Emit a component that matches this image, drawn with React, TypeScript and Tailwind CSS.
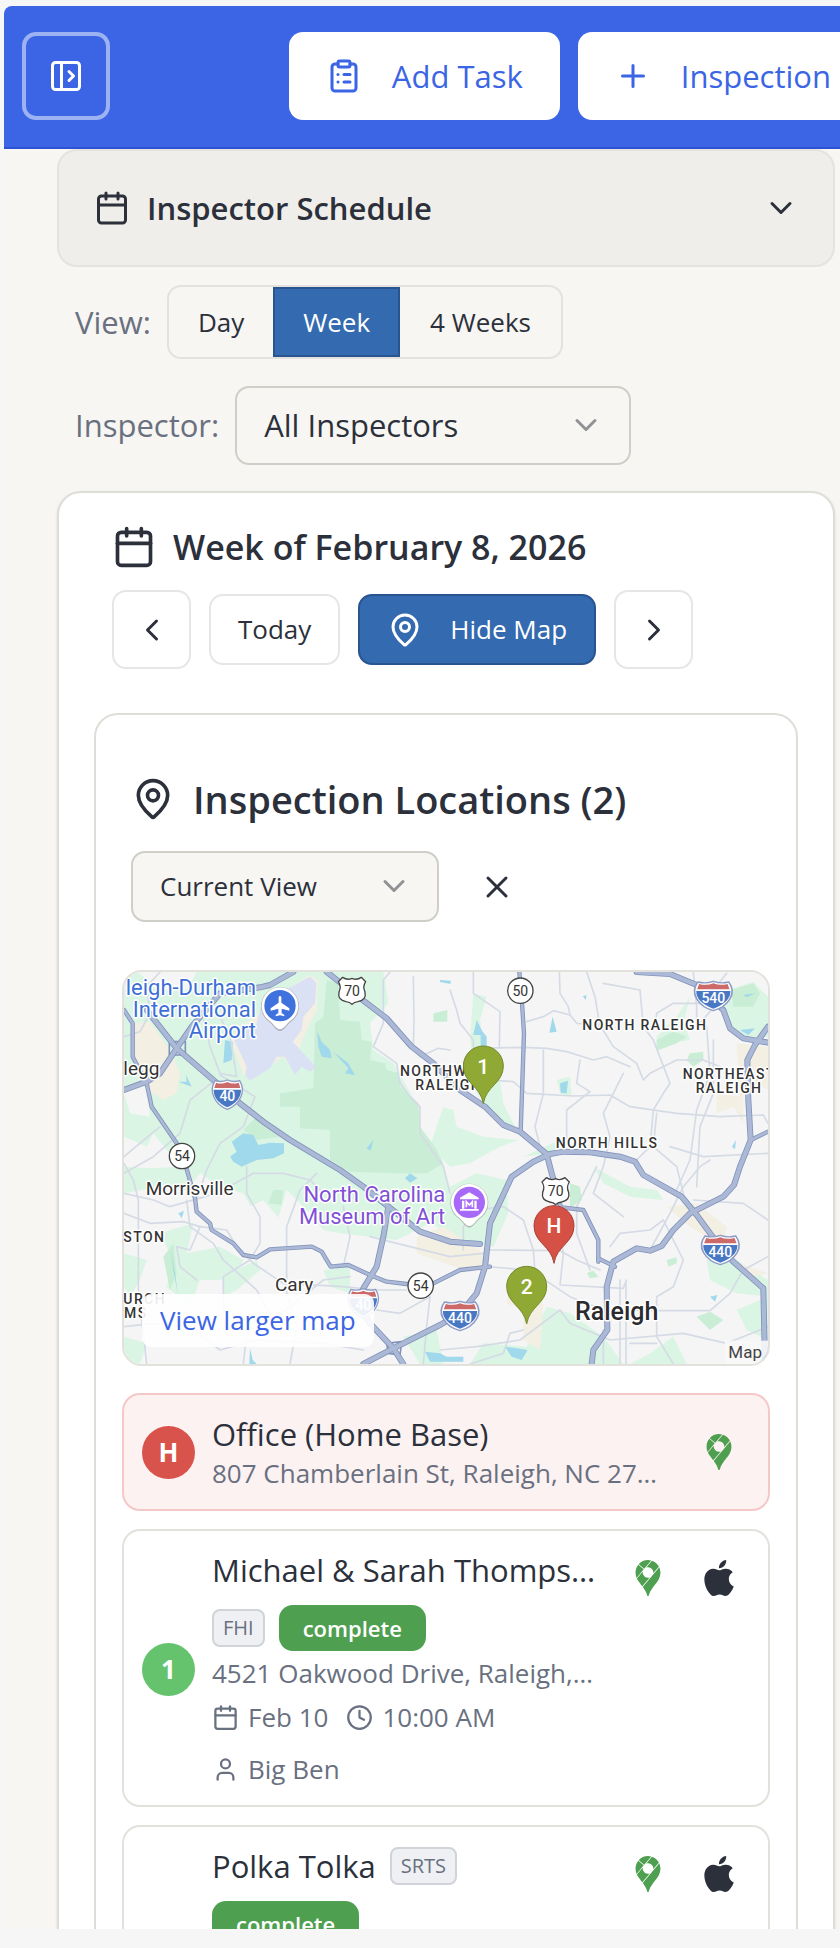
import React from 'react';
import {
  Calendar,
  ChevronDown,
  ChevronLeft,
  ChevronRight,
  ClipboardList,
  Clock,
  MapPin,
  PanelLeftOpen,
  Plus,
  User,
  X,
} from 'lucide-react';
import { SiApple, SiGooglemaps } from 'react-icons/si';

interface Inspection {
  id: number;
  client: string;
  code: string;
  status: string;
  address: string;
  date: string;
  time: string;
  inspector: string;
}

const inspections: Inspection[] = [
  {
    id: 1,
    client: 'Michael & Sarah Thompson',
    code: 'FHI',
    status: 'complete',
    address: '4521 Oakwood Drive, Raleigh, NC 27612',
    date: 'Feb 10',
    time: '10:00 AM',
    inspector: 'Big Ben',
  },
  {
    id: 2,
    client: 'Polka Tolka',
    code: 'SRTS',
    status: 'complete',
    address: '1200 Western Blvd, Raleigh, NC 27606',
    date: 'Feb 11',
    time: '1:00 PM',
    inspector: 'Big Ben',
  },
];

const greens = [
  '42,36 820,36 835,130 780,190 790,270 850,310 890,380 925,440 932,540 1000,610 1020,680 1100,640 1190,660 1195,760 1150,860 1040,830 960,790 860,840 690,820 640,810 600,760 530,690 500,790 440,770 400,700 330,680 270,640 230,690 150,680 42,700',
  '990,440 1030,450 1040,500 1120,530 1225,540 1170,560 1080,610 1020,620 960,560',
  '1090,100 1130,110 1110,180 1125,290 1165,330 1180,430 1215,500 1180,500 1100,400 1080,240',
  '1850,90 1930,66 1974,110 1974,230 1900,240 1860,200 1840,150',
  '150,820 250,790 230,880 330,860 400,900 370,960 270,960 240,1040 170,980 190,900',
  '42,880 110,900 90,960 60,1010 42,980',
  '42,1130 110,1150 90,1212 42,1212',
  '640,930 720,920 720,1000 660,980',
  '1120,1150 1250,1160 1310,1040 1380,1060 1480,1130 1540,1212 1080,1212',
  '1620,1180 1690,1130 1730,1212 1560,1212',
  '1790,900 1880,900 1974,960 1974,1010 1880,1000 1800,960',
  '1880,1050 1974,1010 1974,1140 1910,1110',
  '1450,620 1560,680 1640,690 1660,720 1560,710 1480,670',
  '1640,230 1700,170 1740,110 1720,190 1740,240 1680,250 1640,270',
  '1340,360 1380,350 1385,410 1350,400',
  '1240,590 1350,540 1330,580',
  '340,950 440,900 450,930 380,990 340,1010',
  '880,1130 980,1110 1000,1212 930,1212',
];

const parks = [
  '650,60 685,70 690,180 750,185 755,240 785,245 780,300 825,310 830,330 870,340 870,380 925,430 930,500 975,560 1000,610 950,640 860,640 720,635 660,600 660,510 570,505 570,440 510,440 510,400 610,385 615,190 640,170',
  '970,160 1012,150 1012,185 970,185',
  '400,510 440,470 510,530 440,540',
  '1865,90 1930,70 1950,100 1930,140 1870,140',
  '1740,280 1780,275 1780,300 1750,320 1730,300',
  '1640,240 1690,215 1730,230 1700,250 1640,272',
  '1380,670 1410,680 1415,720 1380,745',
  '1670,900 1700,892 1700,910 1675,920',
  '1760,1070 1800,1055 1840,1080 1800,1110',
  '1430,940 1450,932 1465,950 1440,955',
  '160,890 190,850 200,940 180,990',
  '490,690 520,690 515,735 475,730',
];

const sands = [
  '70,190 120,185 180,270 210,340 200,400 160,420 100,380 72,300',
  '545,80 600,45 625,60 620,150 580,230 550,330 520,290 430,350 400,345 360,230',
  '920,830 1000,800 1110,870 1140,930 1060,930 920,880',
  '1195,990 1250,1040 1300,1030 1290,1170 1240,1140 1240,1050 1190,1030',
  '1880,250 1974,260 1974,390 1900,350 1900,490 1870,440 1820,460 1820,400 1890,410',
  '1670,740 1760,730 1850,800 1840,860 1740,800',
  '1860,900 1974,940 1920,950',
];

const urban = [
  '42,400 105,375 120,470 60,460',
  '85,36 260,36 230,90 140,90',
  '42,530 110,560 130,520 210,620 120,625 42,620',
  '930,450 1000,440 960,560',
  '380,760 460,720 520,790 600,750 640,860 420,850',
];

const waters = [
  '365,545 400,520 430,525 445,555 480,548 522,550 522,580 490,595 440,600 395,620 370,605 360,590 380,575',
  '622,215 635,245 660,270 665,295 635,290 625,260',
  '670,275 715,310 735,345 705,340 715,325',
  '345,240 368,245 365,300 340,310',
  '228,345 245,380 205,365 230,365',
  '770,565 790,540 782,572',
  '1100,180 1118,215 1130,230 1130,260 1112,260 1112,225 1090,225',
  '1328,170 1340,215 1318,218',
  '1350,370 1374,362 1370,400 1352,398',
  '1418,108 1430,106 1427,120',
  '1890,210 1935,205 1915,225',
  '1900,105 1935,100 1910,112',
  '885,655 900,640 922,655 900,668',
  '182,870 195,940 205,1010 190,930',
  '420,1165 428,1200 440,1212 418,1212',
  '945,1175 990,1180 1010,1190 1060,1190 1060,1205 960,1205',
  '1185,1160 1220,1165 1253,1170 1235,1200 1205,1190',
  '1800,1010 1822,1005 1815,1025',
  '1866,560 1878,540 1875,568',
  '990,60 1022,62 1022,72 990,66',
  '205,760 222,752 215,775',
];

const streets = [
  'M42 230 90 215 120 160 110 80 150 36',
  'M280 180 300 260 330 340 380 350 360 230 320 150',
  'M330 345 435 410 400 500 330 550 290 630 260 720',
  'M310 365 240 420 210 520 130 590 42 640',
  'M42 590 150 500',
  'M840 36 820 60 820 190 790 260 860 310 870 370 900 410 930 440 930 520 1000 620 1020 700',
  'M910 50 912 180 910 260 930 290 985 265 1020 270',
  'M1020 90 1040 150 1050 190 1090 240 1090 265 1240 262 1310 265 1370 275 1450 300 1490 290 1560 320',
  'M1090 36 1090 100 1170 155 1168 260',
  'M1250 185 1300 170 1330 152 1380 165 1400 190 1470 195 1510 260 1580 310 1600 360 1620 340 1700 300 1780 300 1830 320',
  'M1348 36 1350 100 1375 140 1380 165',
  'M1430 36 1455 110 1470 200',
  'M1480 70 1590 90 1600 200 1630 240 1680 370 1660 400 1630 450 1620 560 1580 600',
  'M1636 190 1640 160 1690 130 1780 130 1850 40',
  'M1750 36 1760 140 1760 200 1840 110',
  'M1140 360 1210 365 1250 400 1390 408 1500 405 1560 440 1700 460 1830 470 1960 465 1974 490',
  'M1290 560 1275 500 1300 400 1300 270',
  'M1410 300 1400 370 1440 395 1370 450 1370 540 1390 580',
  'M1540 340 1480 460 1500 530 1480 620 1450 700 1540 770',
  'M1640 460 1630 560 1700 620 1720 700',
  'M1790 200 1800 340 1760 450 1740 600 1700 690',
  'M1810 240 1810 400 1770 500 1760 680',
  'M1680 560 1780 590 1974 580',
  'M42 700 130 720 180 740 320 700 430 640 520 640 600 660 640 700',
  'M42 760 120 790 220 785 270 800 240 870 200 860 210 920 260 960',
  'M42 610 70 660 85 720 85 1000 100 1120 110 1212',
  'M230 720 240 800 310 850 340 900 440 990 490 1080 640 960 720 950',
  'M270 800 350 810 380 860 430 910 520 970 700 980 800 990 890 990',
  'M410 620 410 700 450 770 450 850 420 900 340 950 340 1080',
  'M620 640 570 690 530 800 530 1000 560 1100 540 1212',
  'M700 740 720 830 700 920',
  'M780 830 900 860 1020 890 1120 880',
  'M800 1050 870 1060 960 1010 950 1100 940 1212',
  'M42 1100 130 1090 240 1100 330 1170 440 1140 640 1150 760 1170',
  'M400 1212 410 1120 450 1060',
  'M1060 870 1060 800 1100 750 1180 740 1240 780 1270 870 1280 1000',
  'M1140 870 1350 872 1400 900 1470 930',
  'M1330 690 1340 780 1360 880 1350 975 1540 985 1545 970',
  'M1130 920 1260 930 1380 1010 1480 1050 1650 1052 1800 1052 1860 1000 1900 930 1974 890',
  'M990 1170 1100 1160 1230 1140 1350 1050 1380 1090 1500 1140 1720 1120 1850 1150 1974 1100',
  'M1500 860 1530 820 1620 810 1660 780 1680 820 1720 900 1690 980 1640 1010 1640 1130 1690 1212',
  'M1530 960 1530 1212',
  'M1548 960 1548 1212',
  'M1480 1110 1480 1212',
  'M1620 870 1680 760 1720 680 1770 620 1800 600',
  'M1560 1150 1640 1150',
  'M1750 720 1900 730 1974 780',
  'M1240 1110 1200 1120 1180 1180 1080 1212',
  'M1460 620 1400 740 1400 820 1440 930',
];

const highways = [
  'M110 150 200 265 310 360 390 430 460 485 540 540 690 630 760 680 835 740 930 815 1020 845 1110 852',
  'M835 740 820 830 800 920 760 985 750 1040 780 1090 850 1165 880 1212',
  'M42 390 110 365 150 340 200 265 245 200 330 100 450 82 480 75 550 36',
  'M650 36 725 95 830 175 905 260 970 310 1050 390 1125 440 1180 495 1230 515 1310 582 1325 640 1340 690',
  'M760 1212 850 1165 990 1095 1050 1060 1100 1000 1125 920 1140 790 1205 650 1270 605 1320 582 1360 575 1440 577 1530 590 1575 605 1600 645 1715 710 1760 765 1830 860 1870 905 1960 985 1965 1212',
  'M1580 36 1680 42 1760 75 1840 150 1860 205 1900 235 1974 248',
  'M1974 200 1935 255 1912 300 1915 420 1922 540 1890 620 1872 675 1840 710 1740 760 1690 810 1655 858 1620 872 1580 865 1510 905 1490 980 1492 1110 1450 1170 1445 1212',
];

const arterials = [
  'M42 150 68 190 68 290 110 370 125 440 200 550 228 620 255 715 260 755 300 790 305 810 370 850 400 885 440 892 480 868 605 860 635 875 662 920 715 915 780 945 830 965 890 972 930 977 970 970 1050 930 1140 920',
  'M1228 36 1236 130 1242 220 1232 515',
  'M1340 720 1355 742 1420 750 1465 840 1465 905',
  'M1465 895 1515 920',
  'M1922 540 1974 515',
];

const Interstate = ({ x, y, label, wide = false }: { x: number; y: number; label: string; wide?: boolean }) => (
  <g transform={`translate(${x} ${y})`}>
    <g transform={wide ? 'scale(1.25 1)' : undefined}>
      <path
        d="M-37-40Q-18-34 0-42Q18-34 37-40Q52-15 40 10Q28 36 0 46Q-28 36-40 10Q-52-15-37-40Z"
        fill="#fff"
        stroke="#8d9cc6"
        strokeWidth="4"
      />
      <path d="M-34-34Q-16-28 0-36Q16-28 34-34L39-18H-39Z" fill="#cb6a68" />
      <path d="M-41-13H41Q42 20 0 40Q-42 20-41-13Z" fill="#4878c4" />
    </g>
    <text y="22" textAnchor="middle" fontSize="42" fontWeight="500" fill="#fff">
      {label}
    </text>
  </g>
);

const StateRoute = ({ x, y, label }: { x: number; y: number; label: string }) => (
  <g transform={`translate(${x} ${y})`}>
    <circle r="38" fill="#fff" stroke="#444" strokeWidth="4" />
    <text y="15" textAnchor="middle" fontSize="42" fill="#333">
      {label}
    </text>
  </g>
);

const UsRoute = ({ x, y, label }: { x: number; y: number; label: string }) => (
  <g transform={`translate(${x} ${y})`}>
    <path
      d="M-28-40Q-14-30 0-37Q14-30 28-40L41-27Q31-12 39 4Q44 28 18 33Q6 34 0 41Q-6 34-18 33Q-44 28-39 4Q-31-12-41-27Z"
      fill="#fff"
      stroke="#444"
      strokeWidth="4"
      strokeLinejoin="round"
    />
    <text y="15" textAnchor="middle" fontSize="42" fill="#333">
      {label}
    </text>
  </g>
);

const Marker = ({ x, y, label, fill, stroke }: { x: number; y: number; label: string; fill: string; stroke: string }) => (
  <g transform={`translate(${x} ${y})`}>
    <path
      d="M0 113C-8 60-60 52-60 0A60 60 0 0 1 60 0C60 52 8 60 0 113Z"
      fill={fill}
      stroke={stroke}
      strokeWidth="3"
    />
    <text y="23" textAnchor="middle" fontSize="63" fontWeight="500" fill="#fff">
      {label}
    </text>
  </g>
);

const PlacePin = ({ x, y, fill, children }: { x: number; y: number; fill: string; children: React.ReactNode }) => (
  <g transform={`translate(${x} ${y})`}>
    <path
      d="M0 76C-12 76-18 58-40 42A57 57 0 1 1 40 42C18 58 12 76 0 76Z"
      fill="#888"
      opacity=".55"
    />
    <path d="M0 71C-12 71-18 54-38 40A55 55 0 1 1 38 40C18 54 12 71 0 71Z" fill="#fff" />
    <circle r="47" fill={fill} />
    {children}
  </g>
);

const LocationsMap = () => (
  <svg
    viewBox="42 36 1932 1176"
    preserveAspectRatio="xMidYMid slice"
    className="block h-[392px] w-full bg-[#f5f5f5] font-[Roboto,sans-serif]"
    role="img"
    aria-label="Map of inspection locations"
  >
    {greens.map((p) => <polygon key={p} points={p} fill="#daf5e4" />)}
    {urban.map((p) => <polygon key={p} points={p} fill="#f5f5f5" />)}
    {parks.map((p) => <polygon key={p} points={p} fill="#c9edd5" />)}
    {sands.map((p) => <polygon key={p} points={p} fill="#f3efe3" />)}
    <polygon
      points="370,235 440,190 460,110 545,80 600,50 620,70 615,130 580,170 575,210 548,245 618,320 600,335 575,320 555,345 525,290 500,290 480,325 420,362 405,345 410,320"
      fill="#dbe1f5"
    />
    {waters.map((p) => <polygon key={p} points={p} fill="#a0d8ec" />)}

    <g fill="none" strokeLinejoin="round" strokeLinecap="round">
      {streets.map((d) => <path key={d} d={d} stroke="#d5dbe5" strokeWidth="5" />)}
      {arterials.map((d) => <path key={d} d={d} stroke="#8192bb" strokeWidth="13" />)}
      {highways.map((d) => <path key={d} d={d} stroke="#8192bb" strokeWidth="18" />)}
      <path d="M178 245H226V285H178ZM830 1150 875 1145 870 1185 835 1180Z" stroke="#8192bb" strokeWidth="5" />
      {arterials.map((d) => <path key={d} d={d} stroke="#abb9d6" strokeWidth="8" />)}
      {highways.map((d) => <path key={d} d={d} stroke="#abb9d6" strokeWidth="13" />)}
    </g>

    <Interstate x={352} y={402} label="40" />
    <Interstate x={1810} y={106} label="540" wide />
    <Interstate x={760} y={1028} label="40" />
    <Interstate x={1050} y={1066} label="440" wide />
    <Interstate x={1831} y={868} label="440" wide />
    <StateRoute x={216} y={588} label="54" />
    <StateRoute x={1231} y={92} label="50" />
    <StateRoute x={932} y={977} label="54" />
    <UsRoute x={726} y={92} label="70" />
    <UsRoute x={1337} y={693} label="70" />

    <g stroke="#fff" strokeWidth="9" strokeLinejoin="round" style={{ paintOrder: 'stroke' }}>
      <g fontSize="66" fill="#3d6fd6" textAnchor="end">
        <text x="438" y="105">leigh-Durham</text>
        <text x="438" y="170">International</text>
        <text x="438" y="234">Airport</text>
      </g>
      <g fontSize="66" fill="#8150d6" textAnchor="end">
        <text x="1006" y="726">North Carolina</text>
        <text x="1006" y="792">Museum of Art</text>
      </g>
      <g fontSize="57" fill="#333">
        <text x="40" y="346">legg</text>
        <text x="107" y="704">Morrisville</text>
        <text x="495" y="993">Cary</text>
      </g>
      <text x="1520" y="1079" textAnchor="middle" fontSize="75" fontWeight="500" fill="#2b2b2f">Raleigh</text>
      <g fontSize="42" fontWeight="500" fill="#333" className="tracking-widest">
        <text x="870" y="347">NORTHWEST</text>
        <text x="916" y="389">RALEIGH</text>
        <text x="1417" y="210">NORTH RALEIGH</text>
        <text x="1718" y="356">NORTHEAST</text>
        <text x="1757" y="399">RALEIGH</text>
        <text x="1337" y="564">NORTH HILLS</text>
        <text x="40" y="846">STON</text>
        <text x="40" y="1031">URCH</text>
        <text x="42" y="1074">MS</text>
      </g>
    </g>

    <PlacePin x={510} y={137} fill="#4072dd">
      <path d="M-4-26Q0-32 4-26V-9L28 8V15L5 9V22L13 28V32L0 29L-13 32V28L-5 22V9L-28 15V8L-4-9Z" fill="#fff" />
    </PlacePin>
    <PlacePin x={1078} y={727} fill="#a76af8">
      <path d="M0-30 28-14V-9H-28V-14ZM-22-5H-15V19H-22ZM15-5H22V19H15ZM-28 20H28V25H-28Z" fill="#fff" />
      <path d="M-9 15V-2L0 8L9-2V15" fill="none" stroke="#fff" strokeWidth="5" />
    </PlacePin>

    <Marker x={1120} y={318} label="1" fill="#8fa934" stroke="#74892a" />
    <Marker x={1332} y={797} label="H" fill="#d55145" stroke="#a93f35" />
    <Marker x={1250} y={979} label="2" fill="#8fa934" stroke="#74892a" />

    <rect x="1845" y="1142" width="129" height="70" fill="#f8f8f8" opacity=".9" />
    <text x="1855" y="1195" fontSize="51" fill="#444">Map</text>
  </svg>
);

const MapLinks = ({ apple = false }: { apple?: boolean }) => (
  <div className="flex shrink-0 items-center gap-[35px] pr-[13px] pl-[14px]">
    <a href="#google" aria-label="Open in Google Maps" className="text-[#4f9f51]">
      <SiGooglemaps className="size-9" />
    </a>
    {apple && (
      <a href="#apple" aria-label="Open in Apple Maps" className="text-[#2b303b]">
        <SiApple className="size-9" />
      </a>
    )}
  </div>
);

const InspectionCard = ({ item }: { item: Inspection }) => (
  <li className="flex items-center gap-[17px] rounded-[18px] border-2 border-[#e2e2dd] bg-white px-[18px] pt-4 pb-[14px]">
    <span className="flex size-[53px] shrink-0 items-center justify-center rounded-full bg-[#64c36c] text-[26px] font-bold text-white">
      {item.id}
    </span>
    <div className="min-w-0 flex-1 pt-[2px]">
      <div className="flex flex-wrap items-center gap-[14px]">
        <h3 className="truncate text-[31px] leading-[42px] font-medium">{item.client}</h3>
        <span className="rounded-[8px] border-2 border-[#d0d3d8] bg-[#eff0f3] px-[9px] text-[20px] leading-[34px] text-[#697080]">
          {item.code}
        </span>
        <span className="rounded-[14px] bg-[#4f9f51] px-6 text-[22px] leading-[46px] font-semibold text-white">
          {item.status}
        </span>
      </div>
      <p className="truncate text-[26px] leading-[44px] text-[#697080]">{item.address}</p>
      <div className="flex flex-wrap gap-x-[18px] gap-y-2 text-[26px] leading-[44px] text-[#697080]">
        <span className="flex items-center gap-[9px]">
          <Calendar className="size-[27px]" /> {item.date}
        </span>
        <span className="flex items-center gap-[9px]">
          <Clock className="size-[27px]" /> {item.time}
        </span>
        <span className="flex w-full items-center gap-[9px]">
          <User className="size-[27px]" /> {item.inspector}
        </span>
      </div>
    </div>
    <div className="self-start pt-[13px]">
      <MapLinks apple />
    </div>
  </li>
);

const App: React.FC = () => {
  return (
    <div className="h-screen overflow-hidden bg-[#f6f6f6] pt-[6px] pb-[19px] pl-1 font-['Open_Sans',sans-serif] text-[#2b303b]">
      <div className="flex h-full flex-col overflow-hidden rounded-tl-[8px] bg-[#f7f6f2]">
        {/* Top bar */}
        <header className="flex shrink-0 items-center justify-between border-b-2 border-[#2c53d6] bg-[#3b65e5] pt-[26px] pb-[27px] pl-[18px] whitespace-nowrap">
          <button
            aria-label="Open sidebar"
            className="flex size-[88px] shrink-0 items-center justify-center rounded-[14px] border-4 border-white/50 text-white"
          >
            <PanelLeftOpen className="size-9" />
          </button>
          <div className="-mr-[28px] flex gap-[18px] text-[31px] font-medium text-[#3b65e5]">
            <button className="flex h-[88px] items-center gap-[30px] rounded-[14px] bg-white px-[37px]">
              <ClipboardList className="size-9" />
              Add Task
            </button>
            <button className="flex h-[88px] items-center gap-[30px] rounded-[14px] bg-white px-[37px]">
              <Plus className="size-9" />
              Inspection
            </button>
          </div>
        </header>

        <main className="min-h-0 flex-1 overflow-y-auto pr-[5px] pl-[53px] [scrollbar-width:none]">
          <button className="flex h-[118px] w-full items-center gap-[17px] rounded-[20px] border-2 border-[#e4e3df] bg-[#efeeea] pr-[34px] pl-[35px] text-left text-[31px] font-semibold">
            <Calendar className="size-9" />
            <span className="flex-1">Inspector Schedule</span>
            <ChevronDown className="size-9" />
          </button>

          {/* Filters */}
          <div className="flex flex-col gap-[27px] py-[18px] pl-[18px] text-[31px] text-[#697080]">
            <div className="flex items-center gap-4">
              <span>View:</span>
              <div className="flex h-[74px] overflow-hidden rounded-[14px] border-2 border-[#e3e2de] text-[26px] font-medium text-[#2b303b]">
                <button className="px-[29px]">Day</button>
                <button className="border-2 border-[#2a5490] bg-[#336ab0] px-7 text-white">Week</button>
                <button className="px-[30px]">4 Weeks</button>
              </div>
            </div>
            <div className="flex items-center gap-4">
              <label htmlFor="inspector">Inspector:</label>
              <div className="relative">
                <select
                  id="inspector"
                  className="h-[79px] w-[396px] appearance-none rounded-[14px] border-2 border-[#cfcec8] bg-[#f7f6f2] pl-[27px] text-[#2b303b]"
                >
                  <option>All Inspectors</option>
                </select>
                <ChevronDown className="pointer-events-none absolute top-[21px] right-[27px] size-9 text-[#919296]" />
              </div>
            </div>
          </div>

          <section className="mt-2 rounded-[24px] border-2 border-[#deded8] bg-white px-[35px] pt-[27px] pb-9 shadow-sm">
            <h1 className="flex items-center gap-[17px] pl-[18px] text-[34px] leading-[54px] font-semibold">
              <Calendar className="size-[44px]" />
              Week of February 8, 2026
            </h1>
            <div className="flex items-center gap-[18px] pt-4 pl-[18px] text-[26px] font-medium">
              <button
                aria-label="Previous week"
                className="flex size-[79px] items-center justify-center rounded-[14px] border-2 border-[#e6e6e6]"
              >
                <ChevronLeft className="size-9" />
              </button>
              <button className="h-[71px] rounded-[14px] border-2 border-[#e6e6e6] px-[27px]">Today</button>
              <button className="flex h-[71px] items-center gap-[27px] rounded-[14px] border-2 border-[#2a5490] bg-[#336ab0] px-[27px] text-white">
                <MapPin className="size-9" />
                Hide Map
              </button>
              <button
                aria-label="Next week"
                className="flex size-[79px] items-center justify-center rounded-[14px] border-2 border-[#e6e6e6]"
              >
                <ChevronRight className="size-9" />
              </button>
            </div>

            <div className="mt-[44px] rounded-[24px] border-2 border-[#deded8] px-[26px] pt-[54px] pb-[25px]">
              <div className="pl-[9px]">
                <h2 className="flex items-center gap-[18px] text-[38px] leading-[60px] font-semibold">
                  <MapPin className="size-[44px]" />
                  Inspection Locations (2)
                </h2>
                <div className="flex items-center gap-[22px] pt-[22px]">
                  <div className="relative">
                    <select
                      aria-label="Map range"
                      className="h-[71px] w-[308px] appearance-none rounded-[14px] border-2 border-[#cfcec8] bg-[#f7f6f2] pl-[27px] text-[26px]"
                    >
                      <option>Current View</option>
                    </select>
                    <ChevronDown className="pointer-events-none absolute top-[17px] right-[27px] size-9 text-[#919296]" />
                  </div>
                  <button aria-label="Close map" className="flex size-[71px] items-center justify-center">
                    <X className="size-9" />
                  </button>
                </div>
              </div>

              <div className="relative mt-12 overflow-hidden rounded-[20px] border-2 border-[#e2e1dc]">
                <LocationsMap />
                <a
                  href="#map"
                  className="absolute bottom-[17px] left-[18px] rounded-[9px] bg-white/90 px-[18px] text-[26px] leading-[53px] text-[#3b65e5]"
                >
                  View larger map
                </a>
              </div>

              <ul className="flex flex-col gap-[18px] pt-[27px]">
                <li className="flex items-center gap-[17px] rounded-[18px] border-2 border-[#f5c8c8] bg-[#fdf2f2] px-[18px] py-[18px]">
                  <span className="flex size-[53px] shrink-0 items-center justify-center rounded-full bg-[#d9534d] text-[26px] font-bold text-white">
                    H
                  </span>
                  <div className="min-w-0 flex-1">
                    <h3 className="truncate text-[31px] leading-[42px] font-medium">Office (Home Base)</h3>
                    <p className="truncate text-[26px] leading-[36px] text-[#697080]">
                      807 Chamberlain St, Raleigh, NC 27607
                    </p>
                  </div>
                  <MapLinks />
                </li>
                {inspections.map((item) => (
                  <InspectionCard key={item.id} item={item} />
                ))}
              </ul>
            </div>
          </section>
        </main>
      </div>
    </div>
  );
};

export default App;
